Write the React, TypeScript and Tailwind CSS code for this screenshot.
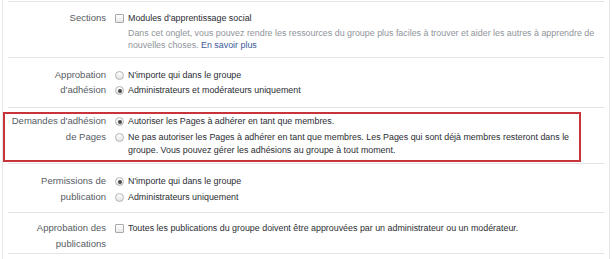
import React from 'react'

type Option = {
  text: string
  checked?: boolean
}

function Radio({checked}: {checked?: boolean}) {
  return (
    <span className="mt-[2px] flex h-[9px] w-[9px] shrink-0 items-center justify-center rounded-full border border-[#b4b4b4] bg-linear-to-b from-white to-[#e4e4e4]">
      {checked && <span className="h-[4px] w-[4px] rounded-full bg-[#4a4a4a]" />}
    </span>
  )
}

function Checkbox() {
  return (
    <span className="mt-[2px] block h-[9px] w-[9px] shrink-0 rounded-[1px] border border-[#a9a9a9] bg-linear-to-b from-white to-[#e8e8e8]" />
  )
}

function Label({lines}: {lines: string[]}) {
  return (
    <div className="-mt-px w-[98px] shrink-0 text-right text-[9.5px] leading-[15.5px] text-[#565b62]">
      {lines.map((l) => (
        <div key={l}>{l}</div>
      ))}
    </div>
  )
}

function RadioGroup({options}: {options: Option[]}) {
  return (
    <div className="mt-px flex flex-1 flex-col gap-[2.5px] pr-[8px]">
      {options.map((o) => (
        <div key={o.text} className="flex items-start">
          <Radio checked={o.checked} />
          <span className="ml-[4px] leading-[13px] text-[#2b2e33]">{o.text}</span>
        </div>
      ))}
    </div>
  )
}

export default function App() {
  return (
    <div className="h-[259px] w-[612px] overflow-hidden bg-white font-['Liberation_Sans',Arial,sans-serif] text-[8.9px]">
      <div className="ml-[2px] h-full w-[608px] border-x border-[#e6e7ea] px-[5px] pt-px">
        {/* Sections */}
        <div className="flex border-t border-[#e3e4e7] pt-[8.5px] pb-[6px]">
          <Label lines={['Sections']} />
          <div className="ml-[9px] mt-px flex flex-1 items-start pr-[8px]">
            <Checkbox />
            <div className="ml-[4px]">
              <div className="leading-[13px] text-[#2b2e33]">Modules d'apprentissage social</div>
              <p className="mt-[2.5px] leading-[12px] text-[#8f949b]">
                Dans cet onglet, vous pouvez rendre les ressources du groupe plus faciles à trouver et aider les autres à apprendre de nouvelles choses.{' '}
                <span className="text-[#3b5998]">En savoir plus</span>
              </p>
            </div>
          </div>
        </div>

        {/* Approbation d'adhésion */}
        <div className="flex border-t border-[#e3e4e7] pt-[9.5px] pb-[9px]">
          <Label lines={['Approbation', "d'adhésion"]} />
          <div className="ml-[9px] flex flex-1">
            <RadioGroup
              options={[
                {text: "N'importe qui dans le groupe"},
                {text: 'Administrateurs et modérateurs uniquement', checked: true},
              ]}
            />
          </div>
        </div>

        {/* Demandes d'adhésion de Pages */}
        <div className="relative flex border-t border-[#e3e4e7] pt-[6.5px] pb-[6.5px]">
          <Label lines={["Demandes d'adhésion", 'de Pages']} />
          <div className="ml-[9px] flex flex-1">
            <RadioGroup
              options={[
                {text: 'Autoriser les Pages à adhérer en tant que membres.', checked: true},
                {
                  text: 'Ne pas autoriser les Pages à adhérer en tant que membres. Les Pages qui sont déjà membres resteront dans le groupe. Vous pouvez gérer les adhésions au groupe à tout moment.',
                },
              ]}
            />
          </div>
          <div className="pointer-events-none absolute -left-[5px] top-[4px] h-[50px] w-[578px] border-2 border-[#c9343a]" />
        </div>

        {/* Permissions de publication */}
        <div className="flex border-t border-[#e3e4e7] pt-[10px] pb-[7.5px]">
          <Label lines={['Permissions de', 'publication']} />
          <div className="ml-[9px] flex flex-1">
            <RadioGroup
              options={[
                {text: "N'importe qui dans le groupe", checked: true},
                {text: 'Administrateurs uniquement'},
              ]}
            />
          </div>
        </div>

        {/* Approbation des publications */}
        <div className="flex border-t border-b border-[#e3e4e7] pt-[8.5px] pb-[1.5px]">
          <Label lines={['Approbation des', 'publications']} />
          <div className="ml-[9px] mt-px flex flex-1 items-start pr-[8px]">
            <Checkbox />
            <span className="ml-[4px] leading-[13px] text-[#2b2e33]">
              Toutes les publications du groupe doivent être approuvées par un administrateur ou un modérateur.
            </span>
          </div>
        </div>
      </div>
    </div>
  )
}
